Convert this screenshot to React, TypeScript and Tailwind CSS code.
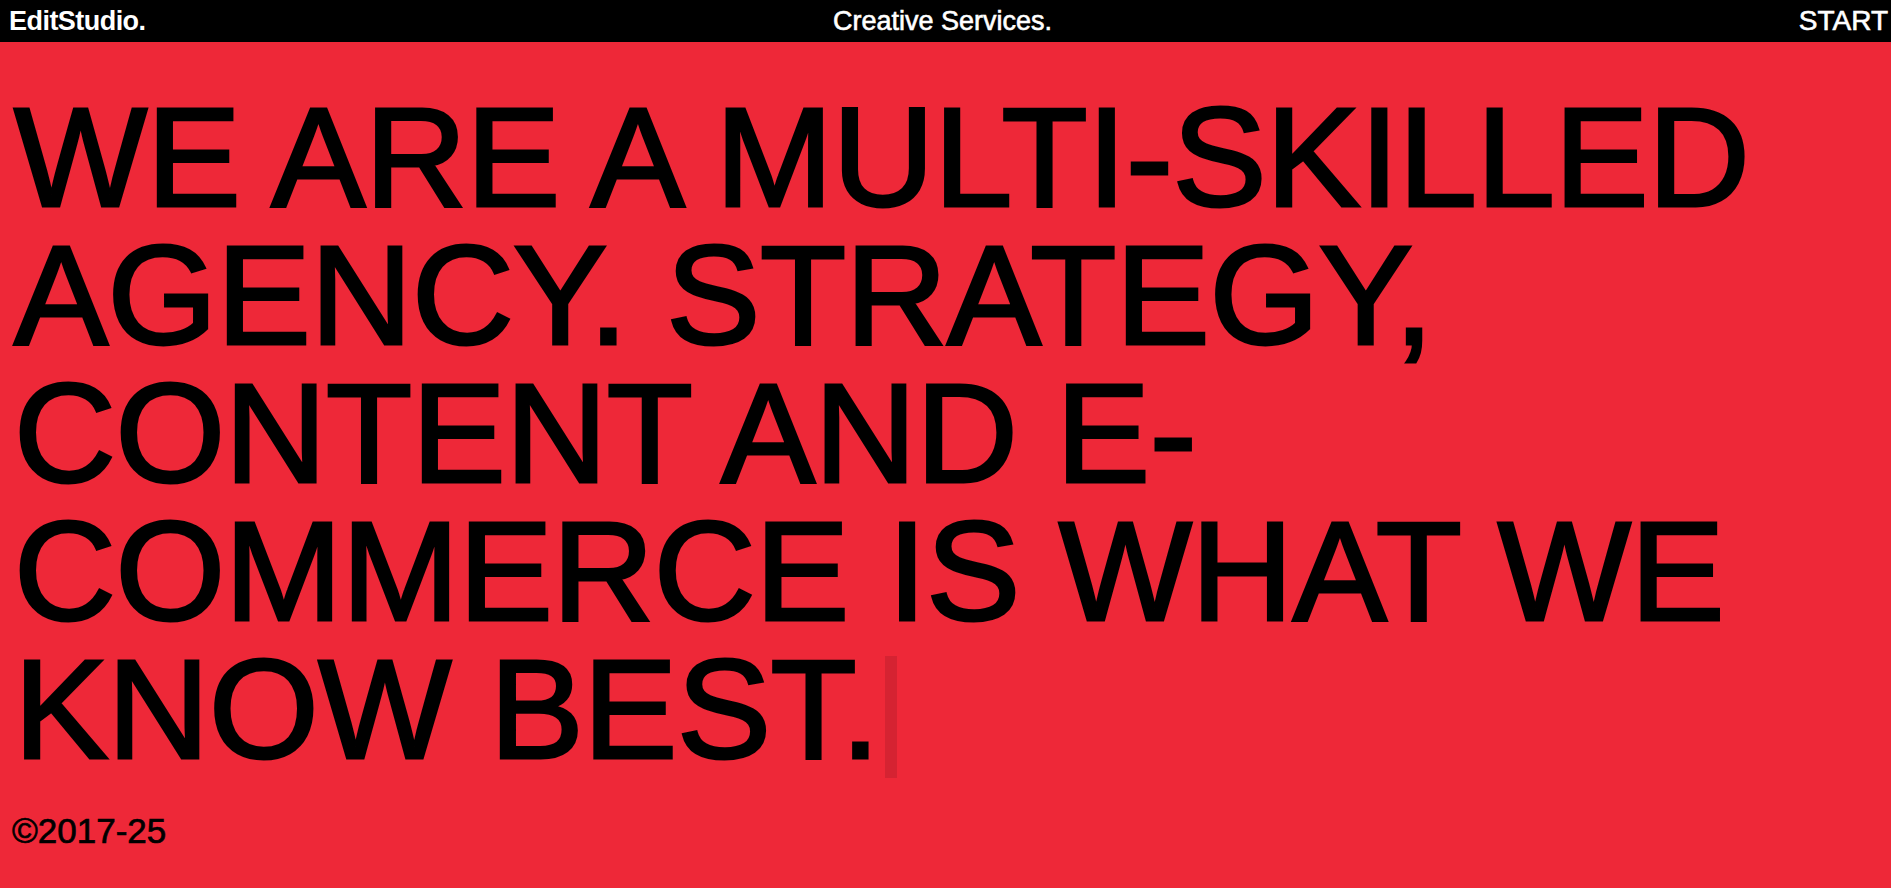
import React from 'react'

const lines = [
  'WE ARE A MULTI-SKILLED',
  'AGENCY. STRATEGY,',
  'CONTENT AND E-',
  'COMMERCE IS WHAT WE',
]

export default function App() {
  return (
    <div
      className="min-h-screen bg-[#ee2838] text-black"
      style={{ fontFamily: '"Liberation Sans", Arial, sans-serif' }}
    >
      <header className="grid h-[42px] grid-cols-[1fr_auto_1fr] items-center bg-black pl-[9px] pr-[3px] text-[27px] leading-none text-white">
        <a href="#" className="justify-self-start font-bold tracking-[-0.02em]">
          EditStudio.
        </a>
        <span className="-translate-x-[6px] [-webkit-text-stroke:0.6px_white]">Creative Services.</span>
        <a href="#" className="justify-self-end text-[28px] [-webkit-text-stroke:0.6px_white]">
          START
        </a>
      </header>

      <main className="pl-[14px] pr-[12px] pt-[46px]">
        <h1 className="text-[141px] leading-[138px] font-normal tracking-[-0.003em] [-webkit-text-stroke:3px_black]">
          {lines.map((line) => (
            <span key={line} className="block whitespace-nowrap">
              {line}
            </span>
          ))}
          <span className="block whitespace-nowrap">
            KNOW BEST.
            <span className="ml-[6px] inline-block h-[122px] w-[12px] align-bottom bg-black/10 [-webkit-text-stroke:0]" />
          </span>
        </h1>

        <p className="-ml-[2px] mt-[35px] text-[35px] leading-none [-webkit-text-stroke:0.7px_black]">©2017-25</p>
      </main>
    </div>
  )
}
